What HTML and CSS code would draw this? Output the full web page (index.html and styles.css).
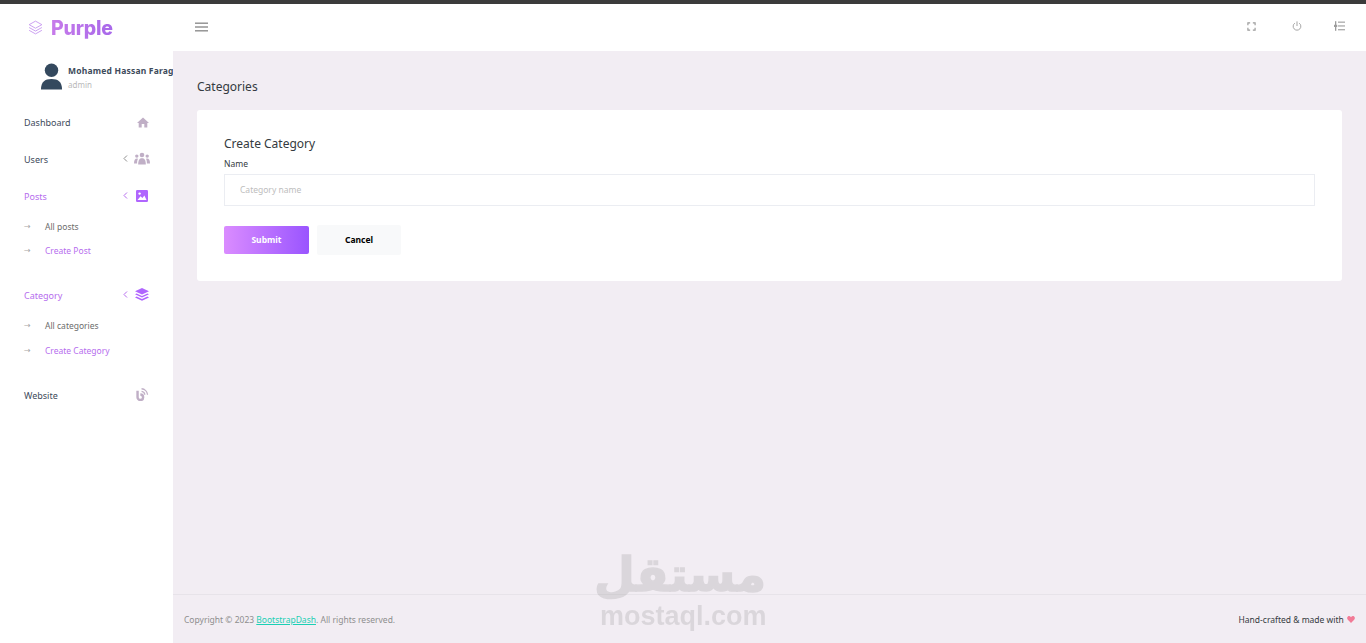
FILE: index.html
```html
<!DOCTYPE html>
<html lang="en">
<head>
  <meta charset="UTF-8" />
  <meta name="viewport" content="width=device-width, initial-scale=1.0" />
  <title>Purple Admin</title>
  <link rel="stylesheet" href="styles.css">
</head>
<body>

  <div class="top-strip"></div>

  <!-- Navbar -->
  <header class="navbar">
    <div class="brand">
      <svg class="brand-icon" viewBox="0 0 24 24" fill="none" stroke="#c79af0" stroke-width="1.3" stroke-linejoin="round">
        <path d="M12 3 L21 8 L12 13 L3 8 Z" />
        <path d="M3 12 L12 17 L21 12" />
        <path d="M3 16 L12 21 L21 16" />
      </svg>
      <span class="brand-name">Purple</span>
    </div>
    <div class="navbar-menu">
      <svg class="nav-icon" viewBox="0 0 13 10" fill="#8e8e8e">
        <rect x="0" y="0.5" width="13" height="1.4" />
        <rect x="0" y="4.3" width="13" height="1.4" />
        <rect x="0" y="8.1" width="13" height="1.4" />
      </svg>
      <div class="navbar-right">
        <svg class="nav-icon-sm" viewBox="0 0 10 10" fill="none" stroke="#9c9c9c" stroke-width="1.3">
          <path d="M1 3.5 V1 H3.5 M6.5 1 H9 V3.5 M9 6.5 V9 H6.5 M3.5 9 H1 V6.5" />
        </svg>
        <svg class="nav-icon-md" viewBox="0 0 12 12" fill="none" stroke="#9c9c9c" stroke-width="1.1">
          <path d="M3.4 2.6 A4.6 4.6 0 1 0 8.6 2.6" />
          <path d="M6 0.5 V6" />
        </svg>
        <svg class="nav-icon-lg" viewBox="0 0 11 10" fill="#9c9c9c">
          <rect x="4" y="0.6" width="7" height="1.1" />
          <rect x="4" y="4.4" width="7" height="1.1" />
          <rect x="4" y="8.2" width="7" height="1.1" />
          <rect x="1" y="0.2" width="1.3" height="9.6" />
          <rect x="0" y="3.8" width="3.2" height="2.2" />
        </svg>
      </div>
    </div>
  </header>

  <div class="page-body">
    <!-- Sidebar -->
    <nav class="sidebar">
      <div class="profile">
        <svg class="avatar" viewBox="0 0 24 28" fill="#34495e">
          <circle cx="12" cy="7" r="7" />
          <path d="M1 27 C1 19 5 16 12 16 C19 16 23 19 23 27 Z" />
        </svg>
        <div class="profile-text">
          <div class="profile-name">Mohamed Hassan Farag</div>
          <div class="profile-role">admin</div>
        </div>
      </div>

      <a class="side-link">
        <span class="side-label">Dashboard</span>
        <svg class="side-icon" viewBox="0 0 12 11" fill="#c0afc6">
          <path d="M6 0.5 L12 6 H10.3 V10.5 H7.3 V7 H4.7 V10.5 H1.7 V6 H0 Z" />
        </svg>
      </a>

      <a class="side-link">
        <span class="side-label">Users</span>
        <svg class="chevron" viewBox="0 0 5 7" fill="none" stroke="#8e8e8e"><path d="M4 0.5 L1 3.5 L4 6.5" /></svg>
        <svg class="side-icon icon-wide" viewBox="0 0 16 12" fill="#c0afc6">
          <circle cx="8" cy="2.5" r="2.3" />
          <circle cx="2.8" cy="3.6" r="1.7" />
          <circle cx="13.2" cy="3.6" r="1.7" />
          <path d="M4.2 12 C4.2 7.5 5.5 5.7 8 5.7 C10.5 5.7 11.8 7.5 11.8 12 Z" />
          <path d="M0 11 C0 7.5 1 6 3 6 L4 6.3 C3.3 7.5 3.1 9 3.1 11 Z" />
          <path d="M16 11 C16 7.5 15 6 13 6 L12 6.3 C12.7 7.5 12.9 9 12.9 11 Z" />
        </svg>
      </a>

      <a class="side-link active">
        <span class="side-label">Posts</span>
        <svg class="chevron" viewBox="0 0 5 7" fill="none" stroke="#b66dee"><path d="M4 0.5 L1 3.5 L4 6.5" /></svg>
        <svg class="side-icon icon-image" viewBox="0 0 12 12">
          <rect width="12" height="12" rx="1.2" fill="#b066fe" />
          <circle cx="3.6" cy="3.6" r="1.2" fill="#fff" />
          <path d="M1.5 10 L4.6 6.2 L6.4 8 L8.4 5.6 L10.5 10 Z" fill="#fff" />
        </svg>
      </a>
      <div class="sub-menu">
        <a class="sub-link"><span class="arrow">→</span>All posts</a>
        <a class="sub-link active"><span class="arrow">→</span>Create Post</a>
      </div>

      <a class="side-link active link-category">
        <span class="side-label">Category</span>
        <svg class="chevron" viewBox="0 0 5 7" fill="none" stroke="#b66dee"><path d="M4 0.5 L1 3.5 L4 6.5" /></svg>
        <svg class="side-icon icon-wide" viewBox="0 0 14 13" fill="#b066fe">
          <path d="M7 0 L14 3.2 L7 6.4 L0 3.2 Z" />
          <path d="M1.6 5.4 L7 7.9 L12.4 5.4 L14 6.3 L7 9.5 L0 6.3 Z" />
          <path d="M1.6 8.5 L7 11 L12.4 8.5 L14 9.4 L7 12.8 L0 9.4 Z" />
        </svg>
      </a>
      <div class="sub-menu sub-menu-category">
        <a class="sub-link"><span class="arrow">→</span>All categories</a>
        <a class="sub-link active"><span class="arrow">→</span>Create Category</a>
      </div>

      <a class="side-link link-website">
        <span class="side-label">Website</span>
        <svg class="side-icon icon-wide" viewBox="0 0 14 14" fill="none" stroke="#c0afc6">
          <path d="M2.2 3 V10 A3 3 0 1 0 5.2 7" stroke-width="2.6" />
          <path d="M6.5 0.8 A7 7 0 0 1 13 7.2 M6.5 3.6 A4 4 0 0 1 10 7.2" stroke-width="1.4" />
        </svg>
      </a>
    </nav>

    <!-- Contenido -->
    <main class="main-panel">
      <div class="content">
        <h3 class="page-title">Categories</h3>
        <section class="card">
          <h4 class="card-title">Create Category</h4>
          <form>
            <label class="field-label" for="cat-name">Name</label>
            <input class="field-input" id="cat-name" type="text" placeholder="Category name" />
            <div class="form-actions">
              <button class="btn btn-submit" type="button">Submit</button>
              <button class="btn btn-cancel" type="button">Cancel</button>
            </div>
          </form>
        </section>
      </div>
      <footer class="footer">
        <span class="copyright">Copyright © 2023 <a class="footer-link">BootstrapDash</a>. All rights reserved.</span>
        <span class="made-with">Hand-crafted &amp; made with
          <svg class="heart" viewBox="0 0 10 9" fill="#f27a96"><path d="M5 9 L0.9 4.8 C-0.4 3.4 -0.2 1.4 1 0.6 C2.4 -0.3 4 0.2 5 1.6 C6 0.2 7.6 -0.3 9 0.6 C10.2 1.4 10.4 3.4 9.1 4.8 Z" /></svg>
        </span>
      </footer>
    </main>
  </div>

  <!-- Marca de agua -->
  <div class="watermark">
    <div class="watermark-ar" lang="ar" dir="rtl">مستقل</div>
    <div class="watermark-en">mostaql.com</div>
  </div>

</body>
</html>
```

FILE: styles.css
```css
* { margin: 0; padding: 0; box-sizing: border-box; }
html, body {
  width: 100%;
  height: 100%;
  overflow: hidden;
  background: #f2edf3;
  font-family: "Noto Sans", "Open Sans", sans-serif;
  color: #343a40;
}

body {
  display: flex;
  flex-direction: column;
}

.top-strip {
  height: 4px;
  background: #3b3b3b;
  flex-shrink: 0;
}

/* Navbar */
.navbar {
  height: 47px;
  flex-shrink: 0;
  display: flex;
  background: white;
}

.brand {
  width: 173px;
  display: flex;
  align-items: center;
  gap: 7px;
  padding-left: 27px;
}

.brand-icon { width: 17px; height: 17px; }

.brand-name {
  font-family: "Inter", sans-serif;
  font-size: 19.5px;
  font-weight: 800;
  letter-spacing: -0.2px;
  background: linear-gradient(to right, #c77bea, #a868ea);
  -webkit-background-clip: text;
  background-clip: text;
  color: transparent;
}

.navbar-menu {
  flex: 1;
  display: flex;
  align-items: center;
  justify-content: space-between;
  padding: 0 21px 0 22px;
}

.nav-icon { width: 13px; height: 10px; display: block; margin-bottom: 1px; }
.nav-icon-sm { width: 9px; height: 9px; display: block; }
.nav-icon-md { width: 10px; height: 10px; display: block; margin-left: 36px; }
.nav-icon-lg { width: 11px; height: 10px; display: block; margin-left: 32px; }

.navbar-right {
  display: flex;
  align-items: center;
  margin-bottom: 3px;
}

/* Layout */
.page-body {
  flex: 1;
  display: flex;
  min-height: 0;
}

.sidebar {
  width: 173px;
  flex-shrink: 0;
  background: white;
  padding-top: 12px;
  overflow: hidden;
}

.profile {
  display: flex;
  align-items: flex-start;
  padding-left: 40px;
  height: 41px;
}

.avatar { width: 23px; height: 28px; flex-shrink: 0; }

.profile-text {
  margin-left: 5px;
  padding-top: 2px;
  white-space: nowrap;
}

.profile-name {
  font-size: 8.5px;
  font-weight: 700;
  letter-spacing: 0.2px;
  line-height: 12px;
  color: #3e4b5b;
}

.profile-role {
  font-size: 8px;
  line-height: 12px;
  margin-top: 2px;
  color: #b9b9b9;
}

.side-link {
  display: flex;
  align-items: center;
  height: 37px;
  padding: 0 23px 0 24px;
  font-size: 9px;
  color: #3e4b5b;
}

.side-link.active { color: #b66dee; }

.link-category { height: 36px; margin-top: 13.5px; }
.link-website { margin-top: 13px; }

.side-label { flex: 1; }

.chevron {
  width: 5px;
  height: 7px;
  margin-right: 6px;
  margin-top: -3px;
}

.side-icon {
  width: 12px;
  height: 11px;
  margin-right: 1px;
  margin-top: -1px;
}

.icon-wide { width: 16px; height: 13px; margin-right: 0; margin-top: -2px; }
.icon-image { width: 12px; height: 12px; margin-right: 2px; margin-left: 2px; margin-top: -2px; }

.sub-menu-category { margin-top: 1px; }

.sub-link {
  display: flex;
  align-items: center;
  height: 24.5px;
  padding: 0 0 2px 24px;
  font-size: 8.5px;
  color: #6c6c6c;
}

.sub-link.active { color: #b66dee; }

.arrow {
  width: 21px;
  font-family: "DejaVu Sans", sans-serif;
  font-size: 8px;
  color: #a9a9a9;
}

/* Contenido */
.main-panel {
  flex: 1;
  min-width: 0;
  display: flex;
  flex-direction: column;
}

.content {
  flex: 1;
  padding: 28px 24px 0;
}

.page-title {
  font-size: 12px;
  font-weight: 400;
  line-height: 16px;
  color: #343a40;
  margin-bottom: 15px;
}

.card {
  height: 171px;
  background: white;
  border-radius: 3px;
  padding: 26px 27px;
}

.card-title {
  font-size: 12px;
  font-weight: 400;
  line-height: 16px;
  color: #343a40;
  margin-bottom: 5px;
}

.field-label {
  display: block;
  font-size: 8.5px;
  line-height: 14px;
  color: #343a40;
  margin-bottom: 3px;
}

.field-input {
  display: block;
  width: 100%;
  height: 32px;
  border: 1px solid #ebedf2;
  outline: none;
  padding: 0 15px 2px;
  font-family: inherit;
  font-size: 8.5px;
  background: white;
}

.field-input::placeholder { color: #bdbdbd; }

.form-actions {
  display: flex;
  align-items: center;
  gap: 8px;
  margin-top: 19px;
}

.btn {
  height: 30px;
  border: none;
  border-radius: 2px;
  padding-bottom: 2px;
  font-family: inherit;
  font-size: 8.5px;
  font-weight: 700;
}

.btn-submit {
  width: 85px;
  height: 28px;
  color: white;
  background: linear-gradient(to right, #da8cff, #9a55ff);
}

.btn-cancel {
  width: 84px;
  color: black;
  background: #f8f9fa;
}

/* Footer */
.footer {
  height: 49px;
  flex-shrink: 0;
  display: flex;
  align-items: center;
  justify-content: space-between;
  padding: 0 11px 0 11px;
  border-top: 1px solid #e7e3e9;
  font-size: 8.5px;
}

.copyright { color: #8e8e8e; }
.footer-link { color: #1bcfb4; text-decoration: underline; }
.made-with { color: #343a40; }
.heart { width: 8px; height: 7px; margin-left: 1px; }

/* Marca de agua */
.watermark {
  position: absolute;
  left: 600px;
  top: 548px;
  width: 166px;
  text-align: center;
  color: #8a8a8a;
  opacity: 0.22;
  pointer-events: none;
}

.watermark-ar {
  font-family: "DejaVu Sans", sans-serif;
  font-size: 47px;
  font-weight: 700;
  line-height: 54px;
  -webkit-text-stroke: 1.5px #8a8a8a;
}

.watermark-en {
  font-family: "Liberation Sans", sans-serif;
  font-size: 27px;
  font-weight: 700;
  line-height: 28px;
}
```
